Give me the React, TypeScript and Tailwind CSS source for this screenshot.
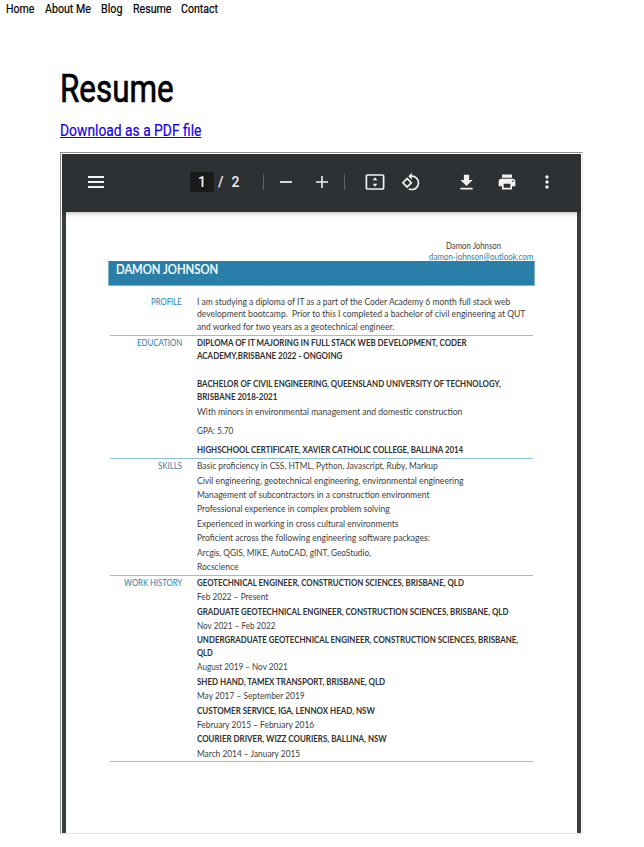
import { useLayoutEffect, useRef, useState } from 'react';
import { MdFileDownload, MdMoreVert, MdPrint, MdRotate90DegreesCcw } from 'react-icons/md';

/** Condenses a single line of text to the given width. */
function Fit({ width, children, className = '' }: { width: number; children: string; className?: string }) {
  const ref = useRef<HTMLSpanElement>(null);
  const [scale, setScale] = useState(1);
  useLayoutEffect(() => {
    if (ref.current) setScale(width / ref.current.offsetWidth);
  }, [width, children]);
  return (
    <span className="block whitespace-nowrap" style={{ width }}>
      <span
        ref={ref}
        className={`inline-block origin-left whitespace-pre ${className}`}
        style={{ transform: `scaleX(${scale})` }}
      >
        {children}
      </span>
    </span>
  );
}

type Line = { text: string; width: number; height: number; bold?: boolean };

const b = (text: string, width: number, height: number): Line => ({ text, width, height, bold: true });
const p = (text: string, width: number, height: number): Line => ({ text, width, height });

const sections: { title: string; width: number; lines: Line[] }[] = [
  {
    title: 'PROFILE',
    width: 31,
    lines: [
      p('I am studying a diploma of IT as a part of the Coder Academy 6 month full stack web', 313.5, 12),
      p('development bootcamp.  Prior to this I completed a bachelor of civil engineering at QUT', 328.5, 13),
      p('and worked for two years as a geotechnical engineer.', 197.5, 14),
    ],
  },
  {
    title: 'EDUCATION',
    width: 45,
    lines: [
      b('DIPLOMA OF IT MAJORING IN FULL STACK WEB DEVELOPMENT, CODER', 270, 13),
      b('ACADEMY,BRISBANE 2022 - ONGOING', 145, 28),
      b('BACHELOR OF CIVIL ENGINEERING, QUEENSLAND UNIVERSITY OF TECHNOLOGY,', 304, 13),
      b('BRISBANE 2018-2021', 80.5, 15),
      p('With minors in environmental management and domestic construction', 265, 19),
      p('GPA: 5.70', 36.5, 19),
      b('HIGHSCHOOL CERTIFICATE, XAVIER CATHOLIC COLLEGE, BALLINA 2014', 266, 14),
    ],
  },
  {
    title: 'SKILLS',
    width: 24,
    lines: [
      p('Basic proficiency in CSS, HTML, Python, Javascript, Ruby, Markup', 241, 15),
      p('Civil engineering, geotechnical engineering, environmental engineering', 266, 14),
      p('Management of subcontractors in a construction environment', 232, 14),
      p('Professional experience in complex problem solving', 193, 15),
      p('Experienced in working in cross cultural environments', 201, 14),
      p('Proficient across the following engineering software packages:', 232.5, 15),
      p('Arcgis, QGIS, MIKE, AutoCAD, gINT, GeoStudio,', 173.5, 14),
      p('Rocscience', 41, 14),
    ],
  },
  {
    title: 'WORK HISTORY',
    width: 58,
    lines: [
      b('GEOTECHNICAL ENGINEER, CONSTRUCTION SCIENCES, BRISBANE, QLD', 267, 14),
      p('Feb 2022 – Present', 71, 15),
      b('GRADUATE GEOTECHNICAL ENGINEER, CONSTRUCTION SCIENCES, BRISBANE, QLD', 311, 14),
      p('Nov 2021 – Feb 2022', 78.5, 14),
      b('UNDERGRADUATE GEOTECHNICAL ENGINEER, CONSTRUCTION SCIENCES, BRISBANE,', 321, 13),
      b('QLD', 16, 14),
      p('August 2019 – Nov 2021', 91, 15),
      b('SHED HAND, TAMEX TRANSPORT, BRISBANE, QLD', 188, 14),
      p('May 2017 – September 2019', 108, 15),
      b('CUSTOMER SERVICE, IGA, LENNOX HEAD, NSW', 178, 14),
      p('February 2015 – February 2016', 117, 14),
      b('COURIER DRIVER, WIZZ COURIERS, BALLINA, NSW', 190, 15),
      p('March 2014 – January 2015', 103, 13),
    ],
  },
];

const links = [
  { label: 'Home', width: 28 },
  { label: 'About Me', width: 46 },
  { label: 'Blog', width: 21.5 },
  { label: 'Resume', width: 38 },
  { label: 'Contact', width: 37 },
];

function Toolbar() {
  return (
    <div className="relative z-10 flex h-[58px] items-center bg-[#2d3134] pb-[2px] text-[#f1f1f1] shadow-[0_1px_5px_rgba(0,0,0,0.3)]">
      <svg className="ml-[26px] h-[14px] w-4" viewBox="0 0 16 14" fill="currentColor">
        <path d="M0 1h16v2H0zM0 6h16v2H0zM0 11h16v2H0z" />
      </svg>
      <div className="ml-[86px] flex h-5 w-6 items-center justify-center bg-[#191b1b] font-['Roboto'] text-[14px] font-medium">1</div>
      <div className="ml-1 w-[21px] whitespace-pre font-['Roboto'] text-[14px] font-medium leading-5 tracking-[0.4px]">/  2</div>
      <div className="ml-6 h-[15px] w-px bg-[#606467]" />
      <div className="ml-4 h-[2px] w-3 bg-[#d5d7d8]" />
      <svg className="ml-6 h-3 w-3" viewBox="0 0 12 12" fill="currentColor">
        <path d="M5.2 0h1.6v5.2H12v1.6H6.8V12H5.2V6.8H0V5.2h5.2z" />
      </svg>
      <div className="ml-4 h-[15px] w-px bg-[#606467]" />
      <svg className="ml-[20px] h-4 w-5" viewBox="0 0 20 16" fill="none">
        <rect x="1.4" y="1" width="17.2" height="14" rx="1" stroke="currentColor" strokeWidth="1.7" />
        <path d="M10 3.2 12.4 6.2H7.6zM10 12.8 7.6 9.8h4.8z" fill="currentColor" />
      </svg>
      <MdRotate90DegreesCcw className="ml-4 size-5" />
      <MdFileDownload className="ml-[35px] size-[21px]" />
      <MdPrint className="ml-[20px] size-5" />
      <MdMoreVert className="ml-5 size-5" />
    </div>
  );
}

export default function App() {
  return (
    <div className="h-[847px] w-[644px] overflow-hidden bg-white text-black">
      <nav className="flex h-[18px] gap-[10.4px] pl-[6.4px] font-['Roboto'] text-[12px] leading-[18px] [-webkit-text-stroke:0.2px]">
        {links.map((l) => (
          <a key={l.label}>
            <Fit width={l.width}>{l.label}</Fit>
          </a>
        ))}
      </nav>
      <main className="pl-[60px] pt-[48px]">
        <h1 className="font-['Roboto'] text-[38px] leading-[46px] [-webkit-text-stroke:0.7px]">
          <Fit width={114}>Resume</Fit>
        </h1>
        <a className="mt-2 block w-[141px] font-['Roboto'] text-[16px] leading-[22px] text-[#1900e6] [-webkit-text-stroke:0.2px]">
          <Fit width={141} className="underline">Download as a PDF file</Fit>
        </a>
        <div className="mt-[10px] h-[682px] w-[523px] border border-b-[#e6e6e6] border-l-[#8c8c8c] border-r-[#e6e6e6] border-t-[#8c8c8c] p-px pb-0">
          <div className="flex h-[679px] flex-col overflow-hidden bg-[#3a4042]">
            <Toolbar />
            <article className="mx-1 grow bg-white font-['Lato'] text-[8.5px] leading-[12px] text-[#3d3d3d]">
              <div className="flex flex-col items-end pt-[29px] leading-[11px]">
                <div className="mr-[76px]"><Fit width={55}>Damon Johnson</Fit></div>
                <div className="mr-[44px] text-[#2a7fa8]"><Fit width={104.5} className="underline">damon-johnson@outlook.com</Fit></div>
              </div>
              <header className="ml-[42px] mt-[-2px] h-[25px] w-[427px] border border-[#7fb3cd] border-t-[#2a7fa8] bg-[#2a7fa8] pl-[7px] text-[13px] font-medium leading-[14px] text-white [-webkit-text-stroke:0.2px]">
                <Fit width={102}>DAMON JOHNSON</Fit>
              </header>
              <div className="ml-[44px] mt-[9px] w-[423px]">
                {sections.map((s) => (
                  <section key={s.title} className="flex border-b border-[#8fc3da] pt-[1px]">
                    <div className="flex w-[72px] justify-end text-[#2a7fa8]">
                      <Fit width={s.width}>{s.title}</Fit>
                    </div>
                    <div className="ml-[15px]">
                      {s.lines.map((l) => (
                        <div key={l.text} style={{ height: l.height }} className={l.bold ? 'font-bold text-[#303030]' : ''}>
                          <Fit width={l.width}>{l.text}</Fit>
                        </div>
                      ))}
                    </div>
                  </section>
                ))}
              </div>
            </article>
          </div>
        </div>
      </main>
    </div>
  );
}
